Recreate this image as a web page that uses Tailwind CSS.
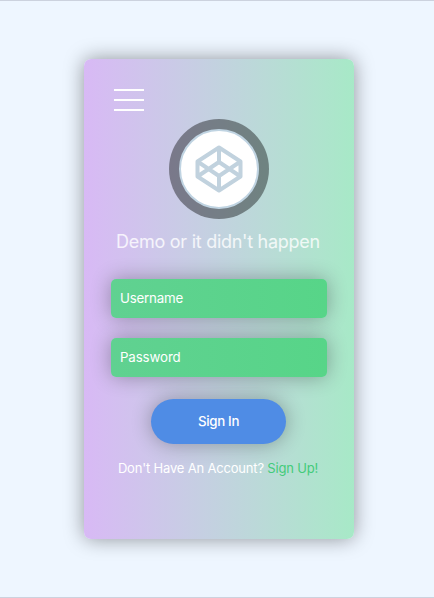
<!DOCTYPE html>
<html lang="en">
<head>
<meta charset="utf-8">
<title>Sign In</title>
<script src="https://cdn.jsdelivr.net/npm/@tailwindcss/browser@4"></script>
</head>
<body class="font-['Inter','Liberation_Sans',sans-serif] text-white">
<main class="h-[598px] w-[434px] overflow-hidden border-y border-[#ccd2de] bg-[#eef6ff] pt-[58px] pl-[84px]">
  <section class="flex h-[480px] w-[270px] flex-col items-center rounded-[7px] bg-linear-to-r from-[#d8b9f5] to-[#a7e9c7] pt-[30px] shadow-[0_0_20px_rgba(0,0,0,0.4)]">
    <button aria-label="Menu" class="ml-[30px] flex w-[30px] flex-col gap-2 self-start">
      <span class="h-[2px] w-full bg-white"></span>
      <span class="h-[2px] w-full bg-white"></span>
      <span class="h-[2px] w-full bg-white"></span>
    </button>
    <div class="mt-2 flex size-[100px] shrink-0 items-center justify-center rounded-full bg-black/40">
      <div class="flex size-20 items-center justify-center rounded-full border-2 border-[#c0d4e2] bg-white">
        <svg class="size-[50px]" viewBox="0 0 50 50" fill="none" stroke="#c1d2de" stroke-width="4" stroke-linejoin="round" aria-hidden="true">
          <path d="M25 3.500 46.500 17.500V32.500L25 46.500 3.500 32.500V17.500ZM3.500 17.500 25 32 46.500 17.500M3.500 32.500 25 18 46.500 32.500M25 3.500V18M25 32V46.500"/>
        </svg>
      </div>
    </div>
    <h1 class="mt-[9px] mr-[2px] h-7 text-[18px] leading-7 font-normal tracking-[-0.270px] whitespace-nowrap text-white/80">Demo or it didn't happen</h1>
    <form class="mt-[23px] flex w-[216px] flex-col">
      <input aria-label="Username" placeholder="Username" class="h-[39px] w-full rounded-[5px] bg-[linear-gradient(90deg,#60d191,#57d588)] px-[9px] pb-[2px] text-[13.300px] tracking-[-0.200px] text-white shadow-[0_0_20px_rgba(0,0,0,0.3)] placeholder:text-white">
      <input aria-label="Password" placeholder="Password" class="mt-5 h-[39px] w-full rounded-[5px] bg-[linear-gradient(90deg,#60d191,#57d588)] px-[9px] pb-[2px] text-[13.300px] tracking-[-0.120px] text-white shadow-[0_0_20px_rgba(0,0,0,0.3)] placeholder:text-white">
      <button type="button" class="mt-[22px] ml-10 h-[45px] w-[135px] rounded-full bg-[#4f8ce5] text-[13.300px] font-medium tracking-[-0.300px] shadow-[0_0_20px_rgba(0,0,0,0.3)]">Sign In</button>
    </form>
    <p class="mt-[14px] mr-[2px] text-[13px] leading-5 tracking-[-0.180px] whitespace-nowrap">Don't Have An Account? <a class="text-[#43cb7a]">Sign Up!</a></p>
  </section>
</main>
</body>
</html>
